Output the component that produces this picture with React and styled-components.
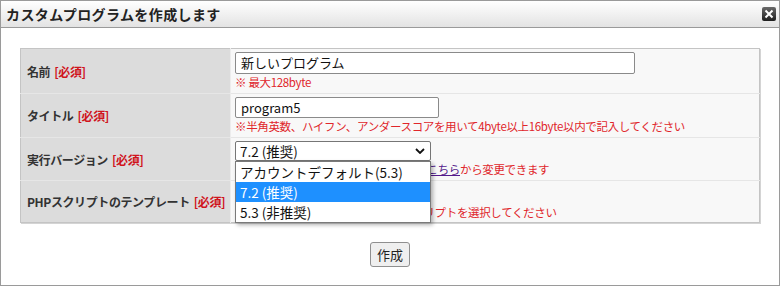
import styled, { createGlobalStyle } from 'styled-components';

const Global = createGlobalStyle`
  body {
    margin: 0;
    font-family: "Noto Sans CJK JP", "Noto Sans", sans-serif;
    color: #222;
  }
`;

const Dialog = styled.div`
  width: 780px;
  height: 286px;
  box-sizing: border-box;
  border: 1px solid #9a9a9a;
  background: #fff;
`;

const TitleBar = styled.div`
  height: 26px;
  border-bottom: 1px solid #9a9a9a;
  background: linear-gradient(#ffffff, #e3e3e3);
  display: flex;
  align-items: center;
  justify-content: space-between;
  padding: 0 2px 0 5px;
`;

const Title = styled.h1`
  margin: 0;
  font-size: 14px;
  font-weight: bold;
  letter-spacing: 0.4px;
  color: #222;
`;

const CloseBtn = styled.button`
  width: 16px;
  height: 16px;
  padding: 0;
  border: 0;
  background: none;
  display: flex;
`;

const Body = styled.div`
  padding: 20px 19px 0;
`;

const Table = styled.table`
  width: 740px;
  table-layout: fixed;
  border-collapse: collapse;
  border: 1px solid #c4c4c4;
  box-shadow: 1px 1px 0 #d4d4d4;
`;

const LabelCol = styled.col`
  width: 210px;
`;

const Row = styled.tr`
  & + & > td {
    border-top: 1px solid #e6e6e6;
  }
`;

const Label = styled.td`
  height: ${p => p.$h}px;
  padding: 0 0 0 6px;
  background: #dcdcdc;
  border-right: 1px solid #ececec;
  font-size: 12px;
  font-weight: bold;
  letter-spacing: -0.4px;
  color: #333;
  vertical-align: middle;
  white-space: nowrap;
  overflow: hidden;
`;

const Required = styled.span`
  color: #d0141c;
  margin-left: 4px;
`;

const Value = styled.td`
  background: #f8f8f8;
  padding: 3px 4px 0;
  vertical-align: top;
`;

const TextInput = styled.div`
  width: ${p => p.$w}px;
  height: ${p => p.$h}px;
  box-sizing: border-box;
  border: 1px solid #8a8a8a;
  border-radius: 2px;
  background: #fff;
  padding: 0 5px;
  font-size: 13px;
  line-height: ${p => p.$h - 2}px;
  color: #111;
`;

const Help = styled.div`
  font-size: 11.5px;
  line-height: 16px;
  color: #e0262b;
  white-space: nowrap;
  letter-spacing: -0.35px;

  a {
    color: #551a8b;
    text-decoration: underline;
  }
`;

const SelectWrap = styled.div`
  position: relative;
  width: 196px;
`;

const SelectBox = styled.div`
  width: 196px;
  height: 20px;
  box-sizing: border-box;
  border: 1px solid #767676;
  border-radius: 2px;
  background: #fff;
  display: flex;
  align-items: center;
  justify-content: space-between;
  padding: 0 5px 0 4px;
  font-size: 13.5px;
  color: #111;
`;

const DropList = styled.ul`
  position: absolute;
  top: 100%;
  left: 0;
  z-index: 2;
  width: 196px;
  box-sizing: border-box;
  margin: 0;
  padding: 0;
  list-style: none;
  background: #fff;
  border: 1px solid #7a7a7a;
  box-shadow: 2px 2px 4px rgba(0, 0, 0, 0.3);
`;

const Option = styled.li`
  height: 20px;
  line-height: 20px;
  padding: 0 4px;
  font-size: 13.5px;
  color: ${p => (p.$selected ? '#fff' : '#111')};
  background: ${p => (p.$selected ? '#1e90ff' : '#fff')};
`;

const Actions = styled.div`
  display: flex;
  justify-content: center;
  padding-top: 19px;
`;

const Button = styled.button`
  width: 40px;
  height: 25px;
  padding: 0;
  border: 1px solid #8f8f8f;
  border-radius: 3px;
  background: #efefef;
  font-family: inherit;
  font-size: 13px;
  color: #222;
`;

const Chevron = () => (
  <svg width="10" height="6" viewBox="0 0 10 6">
    <path d="M1 1l4 4 4-4" fill="none" stroke="#111" strokeWidth="1.8" />
  </svg>
);

const CloseIcon = () => (
  <svg width="16" height="16" viewBox="0 0 16 16">
    <defs>
      <linearGradient id="cg" x1="0" y1="0" x2="0" y2="1">
        <stop offset="0" stopColor="#6a6a6a" />
        <stop offset="1" stopColor="#1e1e1e" />
      </linearGradient>
    </defs>
    <rect x="1" y="1" width="14" height="14" rx="2" fill="url(#cg)" />
    <path d="M4.5 4.5l7 7M11.5 4.5l-7 7" stroke="#fff" strokeWidth="2" />
  </svg>
);

const versions = ['アカウントデフォルト(5.3)', '7.2 (推奨)', '5.3 (非推奨)'];

export default function App() {
  return (
    <>
      <Global />
      <Dialog>
        <TitleBar>
          <Title>カスタムプログラムを作成します</Title>
          <CloseBtn aria-label="閉じる">
            <CloseIcon />
          </CloseBtn>
        </TitleBar>
        <Body>
          <Table>
            <colgroup>
              <LabelCol />
              <col />
            </colgroup>
            <tbody>
              <Row>
                <Label $h={44}>
                  名前<Required>[必須]</Required>
                </Label>
                <Value>
                  <TextInput $w={400} $h={22}>新しいプログラム</TextInput>
                  <Help>※ 最大128byte</Help>
                </Value>
              </Row>
              <Row>
                <Label $h={43}>
                  タイトル<Required>[必須]</Required>
                </Label>
                <Value>
                  <TextInput $w={204} $h={21}>program5</TextInput>
                  <Help>※半角英数、ハイフン、アンダースコアを用いて4byte以上16byte以内で記入してください</Help>
                </Value>
              </Row>
              <Row>
                <Label $h={42}>
                  実行バージョン<Required>[必須]</Required>
                </Label>
                <Value>
                  <SelectWrap>
                    <SelectBox>
                      7.2 (推奨)
                      <Chevron />
                    </SelectBox>
                    <DropList>
                      {versions.map(v => (
                        <Option key={v} $selected={v === '7.2 (推奨)'}>
                          {v}
                        </Option>
                      ))}
                    </DropList>
                  </SelectWrap>
                  <Help>
                    アカウントの既定バージョンの設定は <a href="#">こちら</a>から変更できます
                  </Help>
                </Value>
              </Row>
              <Row>
                <Label $h={41}>
                  PHPスクリプトのテンプレート<Required>[必須]</Required>
                </Label>
                <Value>
                  <SelectBox>
                    なし
                    <Chevron />
                  </SelectBox>
                  <Help>テンプレートとして使用するPHPスクリプトを選択してください</Help>
                </Value>
              </Row>
            </tbody>
          </Table>
          <Actions>
            <Button>作成</Button>
          </Actions>
        </Body>
      </Dialog>
    </>
  );
}
